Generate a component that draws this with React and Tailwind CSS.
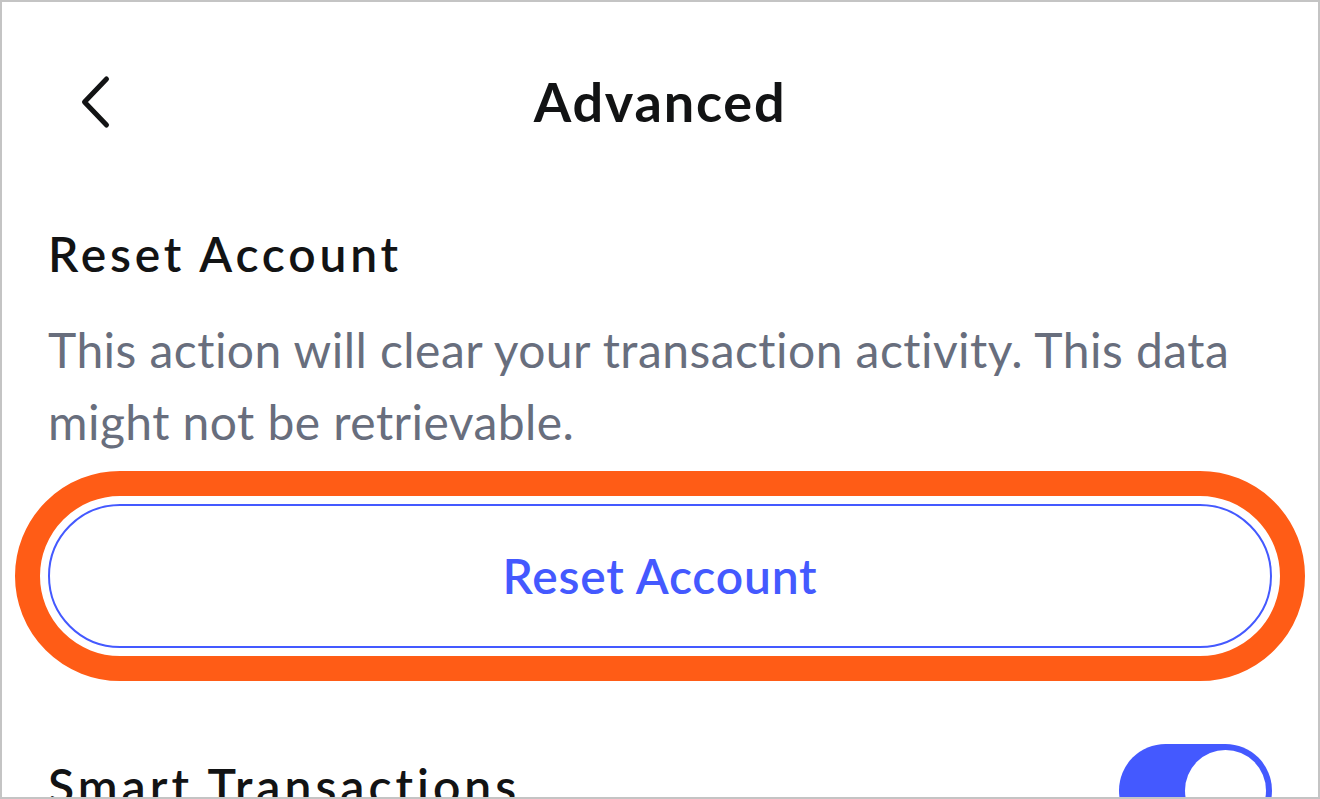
import React from 'react';

const ChevronLeft = () => (
  <svg width="72" height="72" viewBox="0 0 72 72" fill="none">
    <path
      d="M46.5 13 L24.5 36 L46.5 59"
      stroke="#121314"
      strokeWidth="5"
      strokeLinecap="round"
      strokeLinejoin="round"
    />
  </svg>
);

const Toggle = ({ on }) => (
  <div
    className={`relative h-[93px] w-[153px] shrink-0 rounded-full ${
      on ? 'bg-[#4459ff]' : 'bg-[#b7bbc8]'
    }`}
  >
    <div
      className={`absolute top-[6px] h-[81px] w-[81px] rounded-full bg-white ${
        on ? 'right-[6px]' : 'left-[6px]'
      }`}
    />
  </div>
);

export default function App() {
  return (
    <div className="h-[799px] w-[1320px] overflow-hidden border-2 border-[#c4c4c4] bg-white font-['Lato','Liberation_Sans',sans-serif] text-[#121314]">
      {/* Header */}
      <div className="mt-[28px] grid h-[144px] grid-cols-[1fr_auto_1fr] items-center px-[58px]">
        <button className="flex h-[72px] w-[72px] items-center justify-center">
          <ChevronLeft />
        </button>
        <h1 className="text-[54px] font-bold leading-[72px] tracking-[1.8px]">Advanced</h1>
        <div />
      </div>

      {/* Reset account */}
      <div className="mt-[44px] px-[46px]">
        <h2 className="text-[48px] font-semibold leading-[72px] tracking-[3.8px]">Reset Account</h2>
        <p className="mt-[24px] text-[48px] leading-[72px] tracking-[0.45px] text-[#686e7d]">
          This action will clear your transaction activity. This data might not be retrievable.
        </p>
        <button className="mt-[46px] flex h-[144px] w-full items-center justify-center rounded-full border-2 border-[#4459ff] text-[48px] font-semibold tracking-[0.8px] text-[#4459ff] outline-[25px] outline-offset-[8px] outline-solid outline-[#ff5c16]">
          Reset Account
        </button>

        {/* Smart transactions */}
        <div className="mt-[96px] flex items-start justify-between">
          <h2 className="mt-[6px] text-[48px] font-semibold leading-[72px] tracking-[4px]">Smart Transactions</h2>
          <Toggle on />
        </div>
      </div>
    </div>
  );
}
